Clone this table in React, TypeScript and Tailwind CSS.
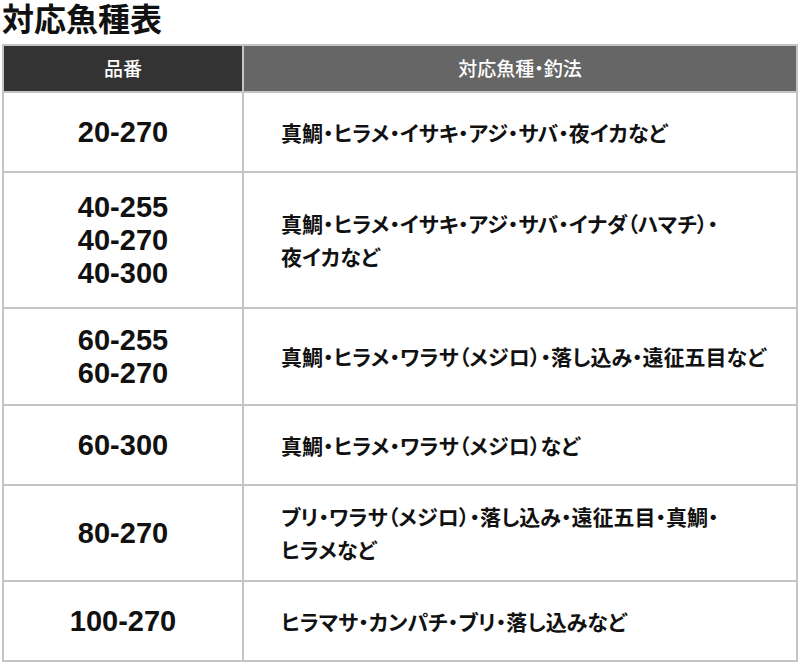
import React from "react";

const rows: { models: string[]; text: string[]; h: string }[] = [
  { models: ["20-270"], text: ["真鯛・ヒラメ・イサキ・アジ・サバ・夜イカなど"], h: "h-[78px]" },
  { models: ["40-255", "40-270", "40-300"], text: ["真鯛・ヒラメ・イサキ・アジ・サバ・イナダ（ハマチ）・", "夜イカなど"], h: "h-[134px]" },
  { models: ["60-255", "60-270"], text: ["真鯛・ヒラメ・ワラサ（メジロ）・落し込み・遠征五目など"], h: "h-[95px]" },
  { models: ["60-300"], text: ["真鯛・ヒラメ・ワラサ（メジロ）など"], h: "h-[78px]" },
  { models: ["80-270"], text: ["ブリ・ワラサ（メジロ）・落し込み・遠征五目・真鯛・", "ヒラメなど"], h: "h-[94px]" },
  { models: ["100-270"], text: ["ヒラマサ・カンパチ・ブリ・落し込みなど"], h: "h-[78px]" },
];

export default function App() {
  return (
    <div className="w-[800px] h-[664px] bg-white px-[2px] overflow-hidden [font-feature-settings:'palt'] font-['Noto_Sans_CJK_JP','Noto_Sans',sans-serif]">
      <h1 className="text-[32px] leading-[34px] font-bold text-[#111]">対応魚種表</h1>
      <div className="mt-[10px] grid grid-cols-[238px_1fr] gap-[2px] p-[2px] bg-[#c4c4c4]">
        <div className="h-[45px] bg-[#333333] text-white flex items-center justify-center text-[19px] font-medium">品番</div>
        <div className="h-[45px] bg-[#666666] text-white flex items-center justify-center text-[19px] font-medium">対応魚種・釣法</div>
        {rows.map((r, i) => (
          <React.Fragment key={i}>
            <div className={`${r.h} bg-white flex flex-col items-center justify-center`}>
              {r.models.map((m) => (
                <div key={m} className="text-[29px] leading-[33px] font-bold text-[#111] font-['Liberation_Sans',Arial,sans-serif]">
                  {m}
                </div>
              ))}
            </div>
            <div className={`${r.h} bg-white flex flex-col justify-center pl-[37px]`}>
              {r.text.map((t) => (
                <div key={t} className="text-[21px] leading-[33px] font-bold text-[#111] whitespace-nowrap">
                  {t}
                </div>
              ))}
            </div>
          </React.Fragment>
        ))}
      </div>
    </div>
  );
}
